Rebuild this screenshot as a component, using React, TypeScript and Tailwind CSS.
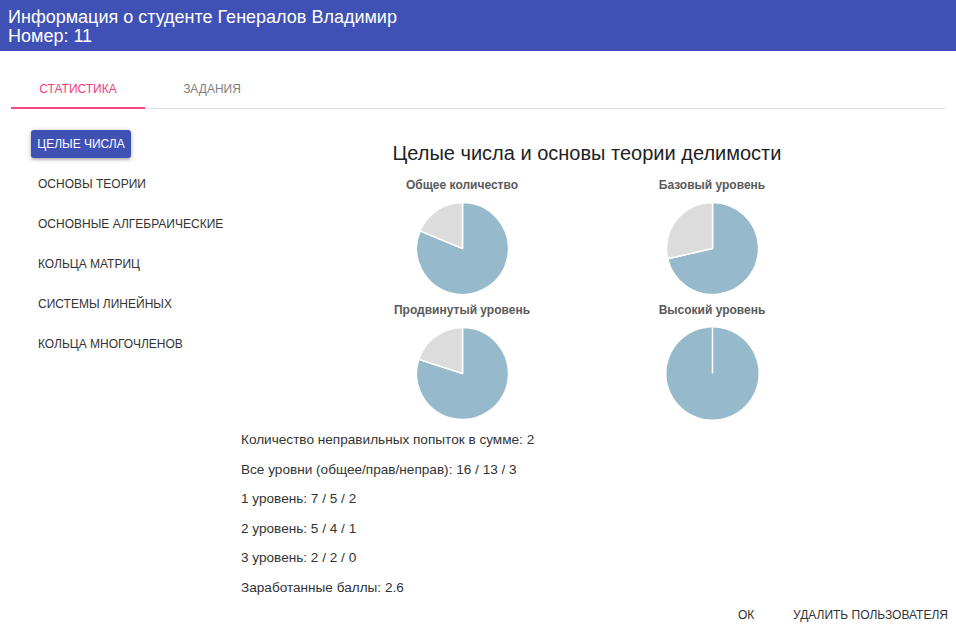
import React from "react";

const font = { fontFamily: '"Liberation Sans", Arial, sans-serif' };

const BLUE = "#97b9cc";
const GRAY = "#dcdcdc";

function Pie({ total, wrong }: { total: number; wrong: number }) {
  const r = 46;
  const cx = 46.5;
  const cy = 46.5;
  const frac = total === 0 ? 0 : wrong / total;
  const a = frac * 2 * Math.PI;
  // gray slice goes counter-clockwise from 12 o'clock
  const x = cx - r * Math.sin(a);
  const y = cy - r * Math.cos(a);
  const large = frac > 0.5 ? 1 : 0;
  const grayPath = `M${cx},${cy} L${cx},${cy - r} A${r},${r} 0 ${large} 0 ${x},${y} Z`;
  const bluePath = `M${cx},${cy} L${cx},${cy - r} A${r},${r} 0 ${1 - large} 1 ${x},${y} Z`;
  return (
    <svg width="93" height="93" viewBox="0 0 93 93">
      {frac === 0 ? (
        <>
          <circle cx={cx} cy={cy} r={r} fill={BLUE} />
          <line x1={cx} y1={cy} x2={cx} y2={cy - r} stroke="white" strokeWidth="1.5" />
        </>
      ) : (
        <>
          <path d={bluePath} fill={BLUE} stroke="white" strokeWidth="1.5" strokeLinejoin="round" />
          <path d={grayPath} fill={GRAY} stroke="white" strokeWidth="1.5" strokeLinejoin="round" />
        </>
      )}
    </svg>
  );
}

function ChartCell({ title, total, wrong }: { title: string; total: number; wrong: number }) {
  return (
    <div className="flex flex-col items-center">
      <div className="h-[14px] text-[12px] leading-[14px] font-bold text-[#5a5a5a]">{title}</div>
      <div className="mt-[10px]">
        <Pie total={total} wrong={wrong} />
      </div>
    </div>
  );
}

const topics = [
  "Основы теории",
  "Основные алгебраические",
  "Кольца матриц",
  "Системы линейных",
  "Кольца многочленов",
];

const stats = [
  "Количество неправильных попыток в сумме: 2",
  "Все уровни (общее/прав/неправ): 16 / 13 / 3",
  "1 уровень: 7 / 5 / 2",
  "2 уровень: 5 / 4 / 1",
  "3 уровень: 2 / 2 / 0",
  "Заработанные баллы: 2.6",
];

export default function App() {
  return (
    <div className="w-[956px] h-[630px] overflow-hidden bg-white" style={font}>
      <header className="bg-[#3f51b5] text-white h-[51px] px-2 pt-[8px] text-[18px] leading-[19px]">
        <div>Информация о студенте Генералов Владимир</div>
        <div>Номер: 11</div>
      </header>

      <div className="px-[11px]">
        <div className="mt-[17px] flex border-b border-[#e0e0e0]">
          <div className="relative w-[134px] h-[40px] pt-[2px] flex items-center justify-center text-[12px] uppercase text-[#f0407a]">
            Статистика
            <span className="absolute left-0 right-0 -bottom-px h-[2px] bg-[#f54a80]" />
          </div>
          <div className="w-[134px] h-[40px] pt-[2px] flex items-center justify-center text-[12px] uppercase text-[#808080]">
            Задания
          </div>
        </div>

        <div className="flex pr-[12px]">
          <nav className="w-[210px] ml-[20px] pt-[15px] flex flex-col">
            <div className="h-[40px] flex items-center">
              <button className="h-[28px] w-[100px] rounded-[3px] bg-[#3f51b5] text-white text-[12px] uppercase shadow-[0_1px_5px_rgba(0,0,0,0.25),0_2px_2px_rgba(0,0,0,0.14)]">
                Целые числа
              </button>
            </div>
            {topics.map((t) => (
              <div key={t} className="h-[40px] flex items-center pl-[7px] text-[12px] uppercase text-[#333]">
                {t}
              </div>
            ))}
          </nav>

          <main className="flex-1 pt-[32px]">
            <h2 className="text-center text-[20px] leading-[24px] text-[#222]">
              Целые числа и основы теории делимости
            </h2>
            <div className="mt-[13px] grid grid-cols-[250px_250px] justify-center gap-y-[8px]">
              <ChartCell title="Общее количество" total={16} wrong={3} />
              <ChartCell title="Базовый уровень" total={7} wrong={2} />
              <ChartCell title="Продвинутый уровень" total={5} wrong={1} />
              <ChartCell title="Высокий уровень" total={2} wrong={0} />
            </div>
            <div className="mt-[5px] text-[13.6px] leading-[29.5px] text-[#333]">
              {stats.map((s) => (
                <p key={s}>{s}</p>
              ))}
            </div>
          </main>
        </div>
      </div>

      <div className="flex justify-end h-[26px] items-center text-[12px] uppercase text-[#333]">
        <button className="w-[64px] text-center">ОК</button>
        <button className="ml-[7px] px-[8px] uppercase">Удалить пользователя</button>
      </div>
    </div>
  );
}
